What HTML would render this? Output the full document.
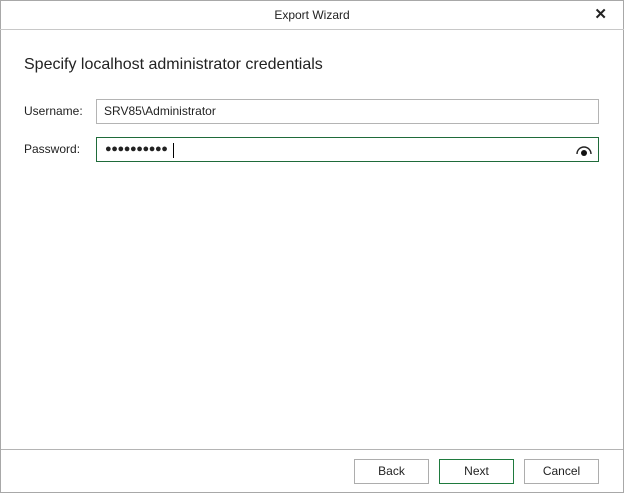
<!DOCTYPE html><html><head><style>
body{margin:0;width:624px;height:493px;font-family:"Liberation Sans",sans-serif;font-size:12px;color:#222;background:#fff;position:relative;overflow:hidden}
.frame{position:absolute;left:0;top:0;width:622px;height:491px;border:1px solid #a8a8a8}
.title{position:absolute;left:0;top:0;width:624px;height:29px;border-bottom:1px solid #c8c8c8;text-align:center;line-height:30px;font-size:12px}
.x{position:absolute;right:17px;top:0px;font-size:15px;font-weight:bold;line-height:30px}
h1{position:absolute;left:24px;top:56px;margin:0;font-size:16px;font-weight:normal;color:#222}
.lab{position:absolute;left:24px;font-size:12px}
.in{position:absolute;left:96px;width:501px;height:23px;border:1px solid #b4b4b4;box-sizing:content-box}
.txt{position:absolute;left:7px;top:4px}
.sep{position:absolute;left:1px;width:622px;top:449px;border-top:1px solid #b4b4b4}
.btn{position:absolute;top:459px;width:73px;height:23px;border:1px solid #adadad;text-align:center;line-height:23px}
</style></head><body>
<div class="frame"></div>
<div class="title">Export Wizard<span class="x">✕</span></div>
<h1>Specify localhost administrator credentials</h1>
<div class="lab" style="top:104px">Username:</div>
<div class="in" style="top:99px"><span class="txt">SRV85\Administrator</span></div>
<div class="lab" style="top:142px">Password:</div>
<div class="in" style="top:137px;border-color:#1f6b3a"><span class="txt" style="left:8px;top:5px;font-size:11px;letter-spacing:-0.4px">●●●●●●●●●●</span><span style="position:absolute;left:76px;top:5px;width:1px;height:15px;background:#000"></span>
<svg style="position:absolute;right:5px;top:5px" width="18" height="14" viewBox="0 0 18 14"><path d="M2 11 A7 7 0 0 1 16 11" fill="none" stroke="#222" stroke-width="1.4"/><circle cx="9" cy="10" r="3" fill="#111"/></svg></div>
<div class="sep"></div>
<div class="btn" style="left:354px">Back</div>
<div class="btn" style="left:439px;border-color:#1f7a3e">Next</div>
<div class="btn" style="left:524px">Cancel</div>
</body></html>
